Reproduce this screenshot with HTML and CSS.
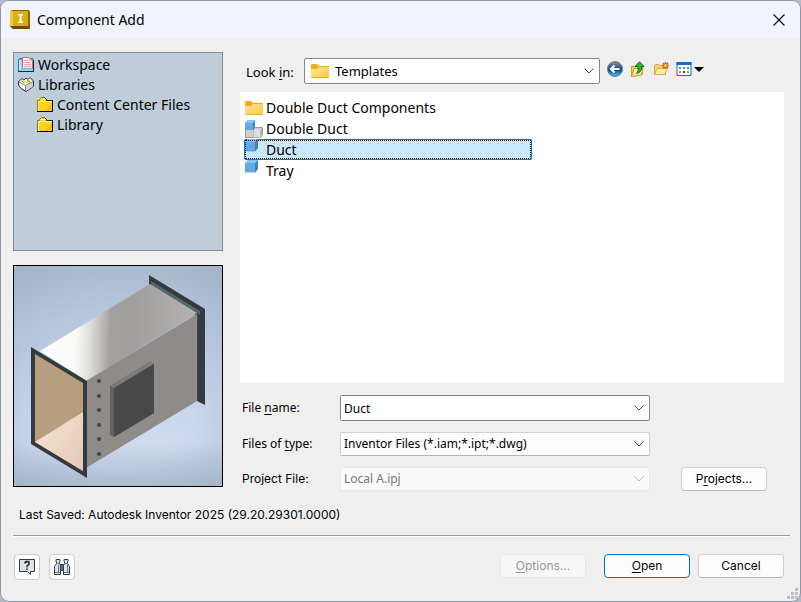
FILE: index.html
```
<!DOCTYPE html>
<html lang="en">
<head>
<meta charset="utf-8">
<meta name="viewport" content="width=device-width, initial-scale=1">
<title>Component Add</title>
<link rel="stylesheet" href="styles.css">
</head>
<body>
<svg class="defs" aria-hidden="true">
  <defs>
    <linearGradient id="folderFill" x1="0" y1="0" x2="1" y2="1">
      <stop offset="0" stop-color="#ffe79a"/><stop offset="1" stop-color="#fdc93c"/>
    </linearGradient>
    <symbol id="folder" viewBox="0 0 18 14">
      <path d="M0 1.5Q0 0 1 0h5l2 2h9q1 0 1 1v3H0z" fill="#f3ab16"/>
      <path d="M0 5h6l2-2h10v10q0 1-1 1H1q-1 0-1-1z" fill="url(#folderFill)"/>
      <path d="M.5 13.5h17" stroke="#e5a92d"/>
    </symbol>
    <symbol id="folder-classic" viewBox="0 0 16 16">
      <path d="M.5 14.500V3.500H2.500V2.500L4.500.5H7.500L9.500 2.500V3.500H15.500V14.500z" fill="#ffd21c" stroke="#8a7a1c"/>
      <path d="M1 4.500h14M1.500 4v10M3.500 2.500h5" stroke="#fff3a6" fill="none"/>
      <path d="M8 14l7-8v8z" fill="#ffbd00"/>
      <path d="M0 14.500H15.500V3" fill="none" stroke="#000"/>
      <path d="M7.500.5 9.500 2.500V3.500H15" fill="none" stroke="#222"/>
    </symbol>
    <symbol id="cube" viewBox="0 0 13 13">
      <path d="M0 3 3 0h10v9l-3 3.500H0z" fill="#62a9e3"/>
      <path d="M0 3 3 0h10l-3 3z" fill="#85c5f3"/>
      <path d="M10 3l3-3v9l-3 3.500z" fill="#3e83bd"/>
    </symbol>
    <symbol id="chevron" viewBox="0 0 10 6">
      <path d="M.5.5 5 5 9.500.5" fill="none" stroke="currentColor"/>
    </symbol>
  </defs>
</svg>

<main class="dialog">
  <header class="titlebar">
    <svg class="app-icon" viewBox="0 0 20 19" aria-hidden="true">
      <path d="M0 2 2 0h17l1 2v17H3L0 16z" fill="#8c6500"/>
      <path d="M0 1h18v15H0z" fill="#dcae0b"/>
      <path d="M0 1h3v15H0z" fill="#ecc741"/>
      <path d="M0 16h18l2 3H3z" fill="#6b4a00"/>
      <path d="M8 4h5v1.500h-1.500v6H13V13H8v-1.500h1.500v-6H8z" fill="#fff"/>
    </svg>
    <h1 class="title">Component Add</h1>
    <button class="close" type="button" aria-label="Close">
      <svg viewBox="0 0 12 12" aria-hidden="true"><path d="M.5.5l11 11M11.500.5l-11 11" stroke="#111" stroke-width="1.200"/></svg>
    </button>
  </header>

  <div class="content">
    <aside class="side">
      <nav class="tree" aria-label="Locations">
        <button class="node" type="button">
          <svg class="icon16" viewBox="0 0 16 16" aria-hidden="true">
            <path d="M.5 14.500V2.500L2 1.500h12.500l1 2v11z" fill="#3fb4ea" stroke="#1f78b4"/>
            <path d="M1 3h2.500v9L1 14z" fill="#b4f0ff"/>
            <path d="M4.500.5h7l3 3v8h-10z" fill="#fff1f3" stroke="#d8606f"/>
            <path d="M11.500.5v3h3M6 3.500h4M6 5.500h7M6 7.500h7M6 9.500h7" stroke="#f3a0ac" fill="none"/>
            <path d="M1 14 4 11.500h11V14z" fill="#7fdcfa"/>
            <path d="M0 14.500h15.500V3" stroke="#0b2c4c" fill="none"/>
          </svg>Workspace</button>
        <button class="node" type="button">
          <svg class="icon16" viewBox="0 0 16 16" aria-hidden="true">
            <path d="M.5 4.500 4 1.500 6 3 8 1 10 2.500 12 .5 15.500 4v5.500L8 14.500 3 11.500.5 8z" fill="#f7f7f4" stroke="#333"/>
            <path d="M4 4.500 6.500 3 8 4.500 10.500 2.500 13 4 8 7z" fill="#ece264"/>
            <path d="M8 8l7-3.500v5L8 14z" fill="#d2d2d2"/>
            <path d="M1 5 7.500 8.500l7.500-4M7.500 8.500v5.500M4 4l2 2M9 3l3 2" stroke="#888" fill="none"/>
          </svg>Libraries</button>
        <button class="node child" type="button"><svg class="icon16" aria-hidden="true"><use href="#folder-classic"/></svg>Content Center Files</button>
        <button class="node child" type="button"><svg class="icon16" aria-hidden="true"><use href="#folder-classic"/></svg>Library</button>
      </nav>

      <figure class="preview">
        <svg viewBox="0 0 208 220" preserveAspectRatio="xMidYMid slice" role="img" aria-label="Duct preview">
          <defs>
            <linearGradient id="sky" x1="0" y1="0" x2="0" y2="1">
              <stop offset="0" stop-color="#afbfd4"/><stop offset=".4" stop-color="#bdcce3"/><stop offset=".8" stop-color="#cfdcf0"/><stop offset="1" stop-color="#acbcd0"/>
            </linearGradient>
            <radialGradient id="edge" cx=".5" cy=".55" r=".75">
              <stop offset=".5" stop-color="#9fb0c8" stop-opacity="0"/><stop offset="1" stop-color="#9aabc1" stop-opacity=".6"/>
            </radialGradient>
            <linearGradient id="sheen" gradientUnits="userSpaceOnUse" x1="26" y1="60" x2="183" y2="64">
              <stop offset="0" stop-color="#fff"/><stop offset=".22" stop-color="#fbfbfa"/><stop offset=".3" stop-color="#e6e5e3"/><stop offset=".38" stop-color="#c4c2c0"/><stop offset=".45" stop-color="#a3a19f"/><stop offset=".6" stop-color="#a19f9d"/><stop offset="1" stop-color="#b5b3b1"/>
            </linearGradient>
            <linearGradient id="floor" x1="0" y1="0" x2="1" y2="1">
              <stop offset="0" stop-color="#f7e5d6"/><stop offset="1" stop-color="#e2c9b4"/>
            </linearGradient>
          </defs>
          <path d="M0 0h208v220H0z" fill="url(#sky)"/>
          <path d="M0 0h208v220H0z" fill="url(#edge)"/>
          <path d="M135 9l56 34v96l-8-4V50l-48-29z" fill="#343a3d"/>
          <path d="M137 15l49 30v4l-49-29z" fill="#55666c"/>
          <path d="M183 48v87" stroke="#4b575c"/>
          <path d="M26 85 136 18l47 29L73 115z" fill="url(#sheen)"/>
          <path d="M72 115 183 48v87L72 202z" fill="#8f8b89"/>
          <path d="M17 81l56 34v97l-56-34z" fill="#343b3e"/>
          <path d="M21 88l48 29v88l-48-29z" fill="#b79e7e"/>
          <path d="M21 176l48-30v59z" fill="url(#floor)"/>
          <path d="M96 120l40-24 4 2v49l-40 24-4-2z" fill="#626262"/>
          <path d="M96 120l40-24 4 2-40 24z" fill="#7b7b7b"/>
          <path d="M100 122l40-24v49l-40 24z" fill="#484848"/>
          <g fill="#3d474d"><circle cx="85" cy="115" r="2"/><circle cx="85" cy="130" r="2"/><circle cx="85" cy="144" r="2"/><circle cx="85" cy="159" r="2"/><circle cx="85" cy="173" r="2"/><circle cx="85" cy="188" r="2"/></g>
        </svg>
      </figure>
    </aside>

    <section class="browser">
      <div class="lookin">
        <label class="lookin-label" for="lookin">Look <u>i</u>n:</label>
        <div class="combo lookin-combo">
          <svg class="combo-icon" aria-hidden="true"><use href="#folder"/></svg>
          <select id="lookin"><option>Templates</option></select>
          <svg class="chevron" aria-hidden="true"><use href="#chevron"/></svg>
        </div>
        <div class="tools">
          <button class="tool" type="button" aria-label="Back">
            <svg viewBox="0 0 16 16" aria-hidden="true">
              <defs><linearGradient id="ball" x1="0" y1="0" x2="0" y2="1"><stop offset="0" stop-color="#8797a6"/><stop offset=".45" stop-color="#23537f"/><stop offset=".6" stop-color="#145591"/><stop offset="1" stop-color="#45c8f0"/></linearGradient></defs>
              <circle cx="8" cy="8" r="7.500" fill="url(#ball)" stroke="#62798d"/>
              <path d="M12.500 8H4.500M7.500 4.500 4 8l3.500 3.500" fill="none" stroke="#fff" stroke-width="2"/>
            </svg>
          </button>
          <button class="tool" type="button" aria-label="Up one level">
            <svg viewBox="0 0 16 16" aria-hidden="true">
              <path d="M1.500 15.500v-10h3l1-1h7v9z" fill="#f1d062" stroke="#c29635"/>
              <path d="M1.500 15.500 4 7.500h9l-1.500 6.500z" fill="#ffed99" stroke="#c29635"/>
              <path d="M6.500 12.500Q9 10 8 5.500H5L9.500.7 14 5.500h-2.500Q12.500 11 6.500 12.500z" fill="#2fae35" stroke="#11701f"/>
            </svg>
          </button>
          <button class="tool" type="button" aria-label="Create new folder">
            <svg viewBox="0 0 16 16" aria-hidden="true">
              <path d="M1.500 13.500v-9l1-1h3l1 1h6v9z" fill="#f4d268" stroke="#d3a144"/>
              <path d="M1.500 13.500 4 7.500h10.500l-3 6z" fill="#ffed9d" stroke="#d9ad4e"/>
              <path d="M12.500 1v7M9 4.500h7M10 2l5 5M15 2l-5 5" stroke="#ee4e22" stroke-width="1.500"/><circle cx="12.500" cy="4.500" r="1.500" fill="#ffd35b"/>
            </svg>
          </button>
          <button class="tool view" type="button" aria-label="View menu">
            <svg class="view-icon" viewBox="0 0 16 16" aria-hidden="true">
              <path d="M1 1.500h14v13H1z" fill="#fff" stroke="#1768d0"/><path d="M.5 1h15v3H.5z" fill="#1768d0"/>
              <path d="M3 6h2v2H3z" fill="#6684d4"/><path d="M7 6h2v2H7z" fill="#7088b0"/><path d="M11 6h2v2h-2z" fill="#38a341"/>
              <path d="M3 10h2v2H3z" fill="#e47a5d"/><path d="M7 10h2v2H7z" fill="#173d9c"/><path d="M11 10h2v2h-2z" fill="#bd9d18"/>
            </svg>
            <svg class="arrow" viewBox="0 0 10 5" aria-hidden="true"><path d="M0 0h10L5 5z"/></svg>
          </button>
        </div>
      </div>

      <div class="files" role="listbox" aria-label="Files">
        <button class="file" type="button" role="option"><svg class="icon18" aria-hidden="true"><use href="#folder"/></svg>Double Duct Components</button>
        <button class="file" type="button" role="option">
          <svg class="icon-assembly" viewBox="0 0 18 18" aria-hidden="true">
            <path d="M.5 9.500h8v8h-8zM8.500 9.500l2-2h7v7l-2 3h-7z" fill="#cfcfcf" stroke="#999"/>
            <path d="M8.500 9.500h7v8h-7z" fill="#dedede"/><path d="M15.500 10v7l2-3V8z" fill="#aaa"/>
            <path d="M0 3 2.500 0H10v7.500L8 10H0z" fill="#62a9e3"/><path d="M0 3 2.500 0H10L8 3z" fill="#85c5f3"/><path d="M8 3l2-3v7.500L8 10z" fill="#3e83bd"/>
          </svg>Double Duct</button>
        <button class="file selected" type="button" role="option" aria-selected="true"><svg class="icon-part" aria-hidden="true"><use href="#cube"/></svg>Duct</button>
        <button class="file" type="button" role="option"><svg class="icon-part" aria-hidden="true"><use href="#cube"/></svg>Tray</button>
      </div>

      <div class="fields">
        <label for="filename">File <u>n</u>ame:</label>
        <div class="combo strong">
          <input id="filename" type="text" value="Duct">
          <svg class="chevron" aria-hidden="true"><use href="#chevron"/></svg>
        </div>
        <label for="filetype">Files of <u>t</u>ype:</label>
        <div class="combo">
          <select id="filetype"><option>Inventor Files (*.iam;*.ipt;*.dwg)</option></select>
          <svg class="chevron" aria-hidden="true"><use href="#chevron"/></svg>
        </div>
        <label class="wide-face" for="project">Project File:</label>
        <div class="combo disabled">
          <select id="project" disabled><option>Local A.ipj</option></select>
          <svg class="chevron" aria-hidden="true"><use href="#chevron"/></svg>
        </div>
        <button class="button projects" type="button">P<u>r</u>ojects...</button>
      </div>
    </section>
  </div>

  <p class="status wide-face">Last Saved: Autodesk Inventor 2025 (29.20.29301.0000)</p>

  <footer class="footer">
    <button class="square" type="button" aria-label="Help">
      <svg viewBox="0 0 16 16" aria-hidden="true">
        <path d="M.5.5h15v12h-4v3l-3-3h-8z" fill="#e1e3e9" stroke="#343c4b"/>
        <path d="M6 4.500V3.500h1V2.500h2.500v1h.500v2L8 7v1.500M8 9.500v1.500" fill="none" stroke="#222936" stroke-width="1.500"/>
      </svg>
    </button>
    <button class="square" type="button" aria-label="Find">
      <svg viewBox="0 0 16 16" aria-hidden="true">
        <path d="M2 .5h4v2H5.500v2l1 2v9h-6v-8l2-3v-2H2zM10 .5h4v2h-.5v2l2 3v8h-6v-9l1-2v-2H10z" fill="#dfe2ea" stroke="#343c4b"/>
        <path d="M6.500 5.500h3v6h-3z" fill="#626b7c" stroke="#343c4b"/><path d="M2 4.500h4M10 4.500h4M1 13.500h5M10 13.500h5M4.500 6v7M13.500 6v7" stroke="#697385"/>
      </svg>
    </button>
    <div class="actions">
      <button class="button" type="button" disabled><u>O</u>ptions...</button>
      <button class="button primary" type="submit"><u>O</u>pen</button>
      <button class="button" type="button">Cancel</button>
    </div>
  </footer>
  <svg class="grip" viewBox="0 0 11 11" aria-hidden="true"><path d="M8 0h3v3H8zM4 4h3v3H4zM8 4h3v3H8zM0 8h3v3H0zM4 8h3v3H4zM8 8h3v3H8z" fill="#bfbfbf"/></svg>
</main>
</body>
</html>
```
FILE: styles.css
```
* { box-sizing: border-box; }

body {
  margin: 0;
  background: #b1bacd;
  color: #000;
  font: 12px/16px "Noto Sans", "Open Sans", sans-serif;
}

button, input, select { font: inherit; color: inherit; }
button { padding: 0; border: 0; background: none; }
svg { display: block; flex: none; }
u { text-underline-offset: 2px; text-decoration-skip-ink: none; }

.defs { position: absolute; width: 0; height: 0; }

.dialog {
  position: relative;
  display: flex;
  flex-direction: column;
  min-height: 100vh;
  border: 1px solid #8b97a8;
  border-radius: 9px;
  background: #efefef;
  overflow: hidden;
}

.titlebar {
  display: flex;
  align-items: center;
  gap: 7px;
  height: 37px;
  padding: 0 14px 0 9px;
  background: #f0f3fb;
}
.app-icon { width: 20px; height: 19px; }
.title { flex: 1; margin: 0; font-size: 14px; font-weight: 400; line-height: 20px; }
.close svg { width: 14px; height: 12px; }

.content {
  flex: 1;
  display: grid;
  grid-template-columns: 210px minmax(0, 1fr);
  gap: 17px;
  padding: 14px 16px 0 12px;
}

.side { display: flex; flex-direction: column; gap: 14px; }
.tree {
  flex: 1;
  padding: 2px 4px;
  border: 1px solid #858b94;
  background: #bfccda;
}
.node {
  display: flex;
  align-items: center;
  gap: 4px;
  width: 100%;
  height: 20px;
  font-size: 14px;
  line-height: 20px;
  white-space: nowrap;
}
.child { padding-left: 19px; }
.icon16 { width: 16px; height: 16px; }
.preview { height: 222px; margin: 0 0 4px; border: 1px solid #000; }
.preview svg { width: 100%; height: 100%; }

.browser { display: flex; flex-direction: column; padding-top: 6px; }
.lookin { display: flex; align-items: center; padding-left: 6px; }
.lookin-label { width: 58px; font-size: 13px; padding-top: 2px; }
.lookin-combo { flex: 1; }
.tools { display: flex; align-items: center; gap: 7px; width: 184px; padding: 0 0 4px 7px; }
.tool svg { width: 16px; height: 16px; }
.view { display: flex; align-items: center; gap: 2px; }
.tool .arrow { width: 10px; height: 5px; }

.combo { position: relative; height: 24px; border: 1px solid #d0d0d0; border-bottom-color: #b5b5b5; border-radius: 2px; background: #fdfdfd; }
.combo select, .combo input {
  appearance: none;
  display: block;
  width: 100%;
  height: 100%;
  margin: 0;
  padding: 0 24px 0 3px;
  border: 0;
  outline: 0;
  background: transparent;
}
.combo .chevron { position: absolute; right: 5px; top: 50%; width: 10px; height: 6px; margin-top: -3px; color: #444; pointer-events: none; }
.strong, .lookin-combo { height: 26px; border-color: #868686; background: #fff; }
.combo-icon { position: absolute; left: 6px; top: 5px; width: 18px; height: 14px; }
.lookin-combo select { padding-left: 30px; font-size: 13px; }
.disabled { border-color: #e8e8e8; background: #f9f9f9; color: #777; }
.disabled select { opacity: 1; }
.disabled .chevron { color: #b4b4b4; }

.files { flex: 1; margin-top: 8px; padding: 5px 4px; background: #fff; }
.file {
  display: grid;
  grid-template-columns: 18px auto;
  justify-content: start;
  align-items: center;
  gap: 3px;
  width: 288px;
  max-width: 100%;
  height: 21px;
  padding-left: 1px;
  font-size: 14px;
  line-height: 20px;
}
.selected { background: #cce8ff; outline: 1px dotted #111; outline-offset: -2px; box-shadow: inset 0 0 0 1px #0078d7; border-radius: 2px; }
.icon18 { width: 18px; height: 14px; }
.icon-assembly { width: 18px; height: 18px; }
.icon-part { width: 13px; height: 13px; align-self: start; }

.fields {
  display: grid;
  grid-template-columns: 98px minmax(0, 310px) 86px;
  align-items: center;
  row-gap: 11px;
  padding: 12px 0 0 2px;
}
.fields > label { grid-column: 1; }
.projects { margin-left: 31px; }

.wide-face, .button { font-family: Inter, "Noto Sans", sans-serif; }

.button {
  width: 86px;
  height: 24px;
  border: 1px solid #d0d0d0;
  border-bottom-color: #b9b9b9;
  border-radius: 4px;
  background: #fdfdfd;
}
.button:disabled { border-color: #e6e6e6; background: #f7f7f7; color: #999; }
.primary { border-color: #0073c4; }

.status { margin: 0 10px 0 12px; padding: 16px 6px 12px; border-bottom: 1px solid #999; box-shadow: 0 1px #fff; }
.footer { display: flex; gap: 9px; padding: 18px 16px 21px 13px; }
.square { display: grid; place-items: center; width: 26px; height: 26px; border: 1px solid #ccc; border-radius: 4px; background: #fdfdfd; }
.square svg { width: 16px; height: 16px; }
.actions { display: flex; gap: 8px; margin-left: auto; }
.actions .primary { margin-left: 10px; }
.grip { position: absolute; right: 2px; bottom: 2px; width: 11px; height: 11px; }
```
